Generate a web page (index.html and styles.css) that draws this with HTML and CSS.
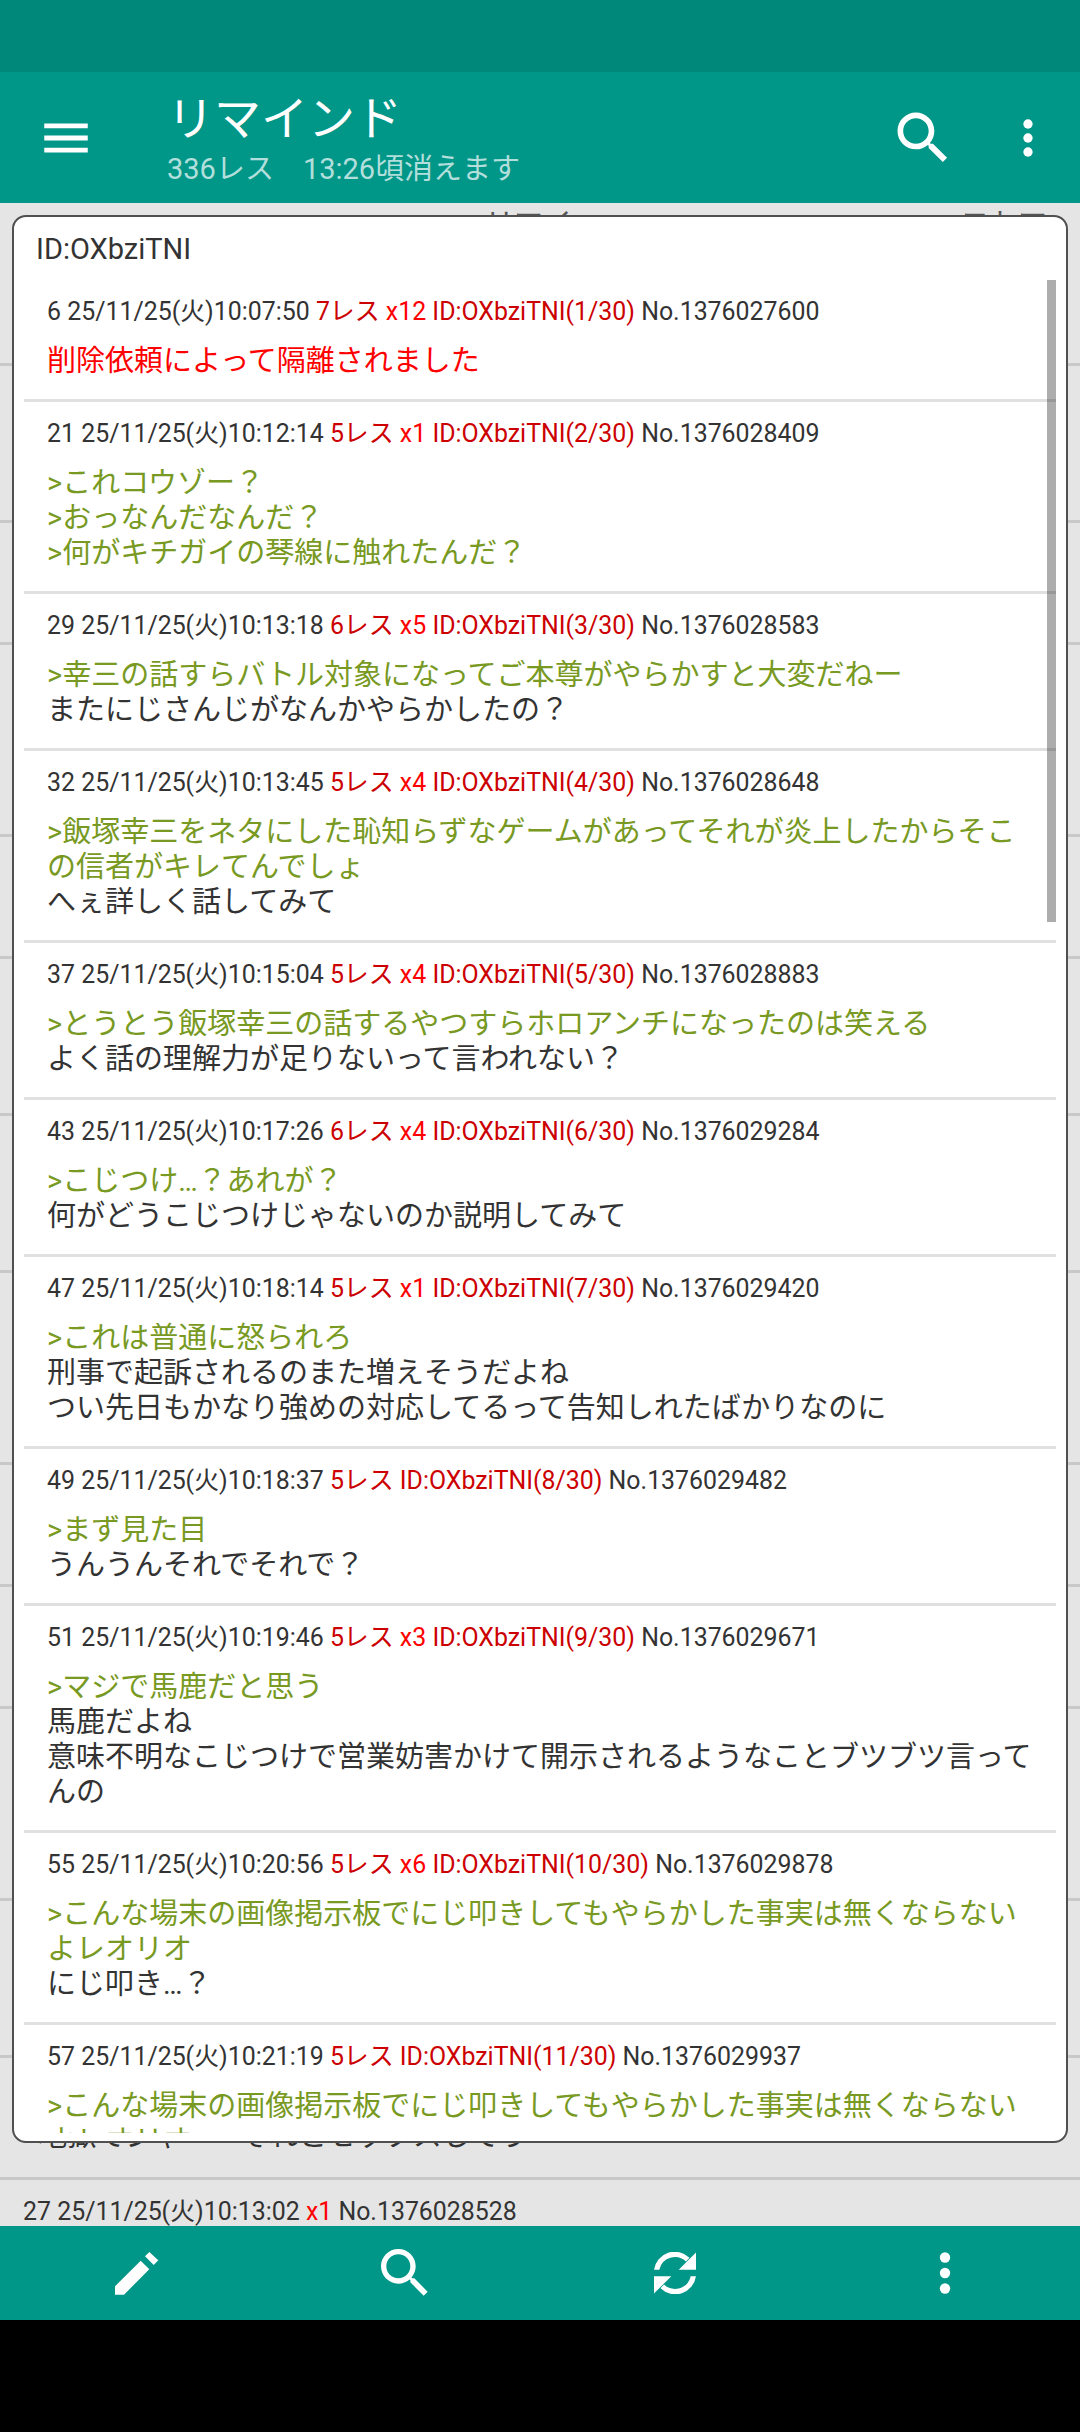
FILE: index.html
```html
<!DOCTYPE html>
<html lang="ja">
<head>
    <meta charset="UTF-8">
    <meta name="viewport" content="width=device-width, initial-scale=1.0">
    <title>リマインド</title>
    <link rel="stylesheet" href="styles.css">
</head>
<body>
    <div class="status-bar"></div>

    <header class="toolbar">
        <div class="nav-btn">
            <svg class="icon-menu" viewBox="0 0 24 24"><path d="M3 18h18v-2H3v2zm0-5h18v-2H3v2zm0-7v2h18V6H3z"/></svg>
        </div>
        <div class="toolbar-title">
            <div class="title-text">リマインド</div>
            <div class="title-sub">336レス　13:26頃消えます</div>
        </div>
        <div class="search-btn">
            <svg class="icon-search-top" viewBox="0 0 24 24"><path d="M15.5 14h-.79l-.28-.27C15.41 12.59 16 11.11 16 9.5 16 5.91 13.09 3 9.5 3S3 5.91 3 9.5 5.91 16 9.5 16c1.61 0 3.09-.59 4.23-1.57l.27.28v.79l5 4.99L20.49 19l-4.99-5zm-6 0C7.01 14 5 11.99 5 9.5S7.01 5 9.5 5 14 7.01 14 9.5 11.99 14 9.5 14z"/></svg>
        </div>
        <div class="more-btn">
            <svg class="icon-more-top" viewBox="0 0 24 24"><circle cx="12" cy="6" r="2"/><circle cx="12" cy="12" r="2"/><circle cx="12" cy="18" r="2"/></svg>
        </div>
    </header>

    <main class="thread">
        <!-- rows of the thread, mostly hidden under the popup -->
        <div class="thread-row row-first">
            <div class="peek-line"><span class="peek-a">リマイン</span><span class="peek-b">コトマン</span></div>
        </div>
        <div class="thread-row lines-2"></div>
        <div class="thread-row lines-1"></div>
        <div class="thread-row lines-3"></div>
        <div class="thread-row lines-1"></div>
        <div class="thread-row lines-2"></div>
        <div class="thread-row lines-2"></div>
        <div class="thread-row lines-3"></div>
        <div class="thread-row lines-1"></div>
        <div class="thread-row lines-1"></div>
        <div class="thread-row lines-3"></div>
        <div class="thread-row lines-2"></div>
        <div class="thread-row row-tail">
            <div class="res-meta">&nbsp;</div>
            <div class="res-body">&gt;地獄でジャー　それとセックスしてう</div>
        </div>
        <div class="thread-row">
            <div class="res-meta">27 25/11/25(火)10:13:02 <span class="red">x1</span> No.1376028528</div>
        </div>

        <!-- popup with the posts of one ID -->
        <section class="popup">
            <div class="popup-title">ID:OXbziTNI</div>
            <div class="popup-list">
                <div class="scroll-thumb"></div>

                <div class="res">
                    <div class="res-meta">6 25/11/25(火)10:07:50 <span class="dull">7レス</span> <span class="red">x12</span> <span class="dull">ID:OXbziTNI(1/30)</span> No.1376027600</div>
                    <div class="res-body red">削除依頼によって隔離されました</div>
                </div>

                <div class="res">
                    <div class="res-meta">21 25/11/25(火)10:12:14 <span class="dull">5レス</span> <span class="red">x1</span> <span class="dull">ID:OXbziTNI(2/30)</span> No.1376028409</div>
                    <div class="res-body"><span class="quote">&gt;これコウゾー？</span><br><span class="quote">&gt;おっなんだなんだ？</span><br><span class="quote">&gt;何がキチガイの琴線に触れたんだ？</span></div>
                </div>

                <div class="res">
                    <div class="res-meta">29 25/11/25(火)10:13:18 <span class="dull">6レス</span> <span class="red">x5</span> <span class="dull">ID:OXbziTNI(3/30)</span> No.1376028583</div>
                    <div class="res-body"><span class="quote">&gt;幸三の話すらバトル対象になってご本尊がやらかすと大変だねー</span><br>またにじさんじがなんかやらかしたの？</div>
                </div>

                <div class="res">
                    <div class="res-meta">32 25/11/25(火)10:13:45 <span class="dull">5レス</span> <span class="red">x4</span> <span class="dull">ID:OXbziTNI(4/30)</span> No.1376028648</div>
                    <div class="res-body"><span class="quote">&gt;飯塚幸三をネタにした恥知らずなゲームがあってそれが炎上したからそこの信者がキレてんでしょ</span><br>へぇ詳しく話してみて</div>
                </div>

                <div class="res">
                    <div class="res-meta">37 25/11/25(火)10:15:04 <span class="dull">5レス</span> <span class="red">x4</span> <span class="dull">ID:OXbziTNI(5/30)</span> No.1376028883</div>
                    <div class="res-body"><span class="quote">&gt;とうとう飯塚幸三の話するやつすらホロアンチになったのは笑える</span><br>よく話の理解力が足りないって言われない？</div>
                </div>

                <div class="res">
                    <div class="res-meta">43 25/11/25(火)10:17:26 <span class="dull">6レス</span> <span class="red">x4</span> <span class="dull">ID:OXbziTNI(6/30)</span> No.1376029284</div>
                    <div class="res-body"><span class="quote">&gt;こじつけ…？あれが？</span><br>何がどうこじつけじゃないのか説明してみて</div>
                </div>

                <div class="res">
                    <div class="res-meta">47 25/11/25(火)10:18:14 <span class="dull">5レス</span> <span class="red">x1</span> <span class="dull">ID:OXbziTNI(7/30)</span> No.1376029420</div>
                    <div class="res-body"><span class="quote">&gt;これは普通に怒られろ</span><br>刑事で起訴されるのまた増えそうだよね<br>つい先日もかなり強めの対応してるって告知しれたばかりなのに</div>
                </div>

                <div class="res">
                    <div class="res-meta">49 25/11/25(火)10:18:37 <span class="dull">5レス</span> <span class="dull">ID:OXbziTNI(8/30)</span> No.1376029482</div>
                    <div class="res-body"><span class="quote">&gt;まず見た目</span><br>うんうんそれでそれで？</div>
                </div>

                <div class="res">
                    <div class="res-meta">51 25/11/25(火)10:19:46 <span class="dull">5レス</span> <span class="red">x3</span> <span class="dull">ID:OXbziTNI(9/30)</span> No.1376029671</div>
                    <div class="res-body"><span class="quote">&gt;マジで馬鹿だと思う</span><br>馬鹿だよね<br>意味不明なこじつけで営業妨害かけて開示されるようなことブツブツ言ってんの</div>
                </div>

                <div class="res">
                    <div class="res-meta">55 25/11/25(火)10:20:56 <span class="dull">5レス</span> <span class="red">x6</span> <span class="dull">ID:OXbziTNI(10/30)</span> No.1376029878</div>
                    <div class="res-body"><span class="quote">&gt;こんな場末の画像掲示板でにじ叩きしてもやらかした事実は無くならないよレオリオ</span><br>にじ叩き…？</div>
                </div>

                <div class="res">
                    <div class="res-meta">57 25/11/25(火)10:21:19 <span class="dull">5レス</span> <span class="dull">ID:OXbziTNI(11/30)</span> No.1376029937</div>
                    <div class="res-body"><span class="quote">&gt;こんな場末の画像掲示板でにじ叩きしてもやらかした事実は無くならないよレオリオ</span></div>
                </div>
            </div>
        </section>
    </main>

    <footer class="bottom-bar">
        <div class="bottom-btn">
            <svg class="icon-edit" viewBox="0 0 44 43"><path d="M0 34.3 25.7 8.7l8.6 8.6L9 42.7H0zM34.3 0l9 8.3-4.6 4.7L30 4.3z"/></svg>
        </div>
        <div class="bottom-btn">
            <svg class="icon-search" viewBox="0 0 24 24"><path d="M15.5 14h-.79l-.28-.27C15.41 12.59 16 11.11 16 9.5 16 5.91 13.09 3 9.5 3S3 5.91 3 9.5 5.91 16 9.5 16c1.61 0 3.09-.59 4.23-1.57l.27.28v.79l5 4.99L20.49 19l-4.99-5zm-6 0C7.01 14 5 11.99 5 9.5S7.01 5 9.5 5 14 7.01 14 9.5 11.99 14 9.5 14z"/></svg>
        </div>
        <div class="bottom-btn">
            <svg class="icon-sync" viewBox="-21 -21 42 42">
                <path d="M-21-3.3A21 21 0 0 1 14.5-15.2L11-11.5A16 16 0 0 0-15.7-3.3zM21-20.5V-3.3H3.7z"/>
                <path transform="rotate(180)" d="M-21-3.3A21 21 0 0 1 14.5-15.2L11-11.5A16 16 0 0 0-15.7-3.3zM21-20.5V-3.3H3.7z"/>
            </svg>
        </div>
        <div class="bottom-btn">
            <svg class="icon-more" viewBox="0 0 24 24"><circle cx="12" cy="6" r="2"/><circle cx="12" cy="12" r="2"/><circle cx="12" cy="18" r="2"/></svg>
        </div>
    </footer>

    <div class="nav-bar"></div>
</body>
</html>
```

FILE: styles.css
```css
* {
    margin: 0;
    padding: 0;
    box-sizing: border-box;
}

html, body {
    height: 2432px;
    overflow: hidden;
}

body {
    display: flex;
    flex-direction: column;
    background-color: #000;
    color: #333;
    font-family: Roboto, 'Noto Sans CJK JP', sans-serif;
}

svg {
    display: block;
    fill: white;
}

.status-bar {
    flex: none;
    height: 72px;
    background-color: #00897b;
}

/* toolbar */
.toolbar {
    flex: none;
    height: 131px;
    display: flex;
    align-items: center;
    background-color: #009688;
}

.nav-btn {
    flex: none;
    width: 132px;
    display: flex;
    justify-content: center;
}

.icon-menu {
    width: 58px;
    height: 58px;
}

.toolbar-title {
    flex: 1;
    padding-left: 35px;
}

.title-text {
    color: white;
    font-size: 47px;
    line-height: 60px;
}

.title-sub {
    color: #b2dfdb;
    font-size: 29px;
    line-height: 36px;
    margin-top: 2px;
}

.search-btn {
    flex: none;
    width: 107px;
    display: flex;
    justify-content: center;
}

.icon-search-top {
    width: 68px;
    height: 68px;
}

.more-btn {
    flex: none;
    width: 104px;
    display: flex;
    justify-content: center;
}

.icon-more-top {
    width: 56px;
    height: 56px;
}

/* thread under the popup */
.thread {
    flex: none;
    height: 2023px;
    position: relative;
    overflow: hidden;
    background-color: #e5e5e5;
}

.thread-row {
    padding: 14px 23px 20px;
    border-bottom: 3px solid #c8c8c8;
}

.row-first {
    height: 163px;
    padding-top: 0;
}

.lines-1 {
    height: 122px;
}

.lines-2 {
    height: 157px;
}

.lines-3 {
    height: 192px;
}

.row-tail {
    height: 122px;
}

.row-tail .res-body {
    margin-top: 11px;
}

.peek-line {
    display: flex;
    font-size: 29px;
    line-height: 35px;
    color: #555;
    padding-top: 4px;
}

.peek-a {
    margin-left: 462px;
}

.peek-b {
    margin-left: 378px;
}

.res-meta {
    font-size: 24.9px;
    line-height: 36px;
    white-space: nowrap;
}

.res-body {
    margin-top: 14px;
    font-size: 29px;
    line-height: 35px;
}

.red {
    color: #ff0000;
}

.dull {
    color: #cc0000;
}

.quote {
    color: #789922;
}

/* popup */
.popup {
    position: absolute;
    top: 12px;
    left: 12px;
    width: 1056px;
    height: 1928px;
    display: flex;
    flex-direction: column;
    padding: 0 10px 8px;
    background-color: white;
    border: 2px solid #505050;
    border-radius: 14px;
}

.popup-title {
    flex: none;
    height: 63px;
    padding-top: 2px;
    padding-left: 12px;
    font-size: 29px;
    line-height: 60px;
}

.popup-list {
    flex: 1;
    position: relative;
    overflow: hidden;
}

.scroll-thumb {
    position: absolute;
    top: 0;
    right: 0;
    width: 9px;
    height: 642px;
    background-color: rgba(0, 0, 0, 0.32);
}

.res {
    padding: 14px 23px 20px;
    border-bottom: 3px solid #e0e0e0;
}

/* bottom bar */
.bottom-bar {
    flex: none;
    height: 94px;
    display: flex;
    align-items: center;
    background-color: #009688;
}

.bottom-btn {
    flex: 1;
    display: flex;
    justify-content: center;
}

.icon-edit {
    width: 44px;
    height: 43px;
    margin-left: 3px;
}

.icon-search {
    width: 64px;
    height: 64px;
}

.icon-sync {
    width: 42px;
    height: 42px;
}

.icon-more {
    width: 62px;
    height: 62px;
}

.nav-bar {
    flex: 1;
    background-color: #000;
}
```
